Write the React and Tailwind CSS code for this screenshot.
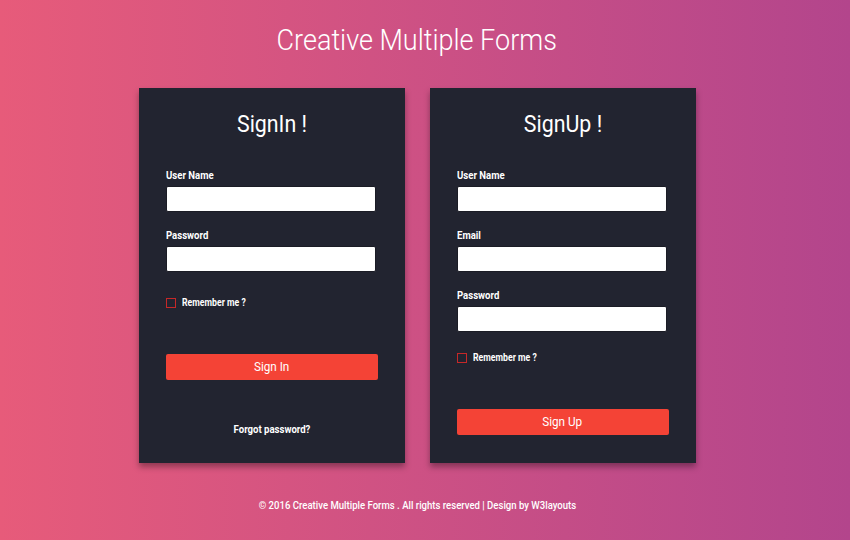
import React from 'react'

// Roboto Condensed isn't installed, so text is narrowed with scale-x
const Field = ({ label, type = 'text', first }) => (
  <div className={first ? 'mt-[30px]' : 'mt-[17px]'}>
    <label className="block origin-left scale-x-[0.87] text-[11px] leading-[14px] font-bold text-white">{label}</label>
    <input
      type={type}
      className="mt-[3px] block w-[210px] h-[26px] bg-white rounded-[2px] border border-[#1b1c25] outline-none"
    />
  </div>
)

const Remember = ({ mt }) => (
  <label className={`flex items-center gap-[6px] ${mt}`}>
    <span className="w-[10px] h-[10px] border border-[#c62828] inline-block" />
    <span className="inline-block origin-left scale-x-[0.87] text-[10px] leading-[14px] font-bold text-white">Remember me ?</span>
  </label>
)

const Button = ({ children, mt }) => (
  <button
    className={`${mt} block w-[212px] h-[26px] bg-[#f44336] rounded-[2px] text-white text-[13px] leading-[26px]`}
  >
    <span className="inline-block scale-x-[0.9]">{children}</span>
  </button>
)

const App = () => {
  return (
    <div
      className="w-[850px] h-[540px] pr-[16px] bg-gradient-to-r from-[#e75b7a] to-[#b3458c] flex flex-col items-center"
      style={{ fontFamily: 'Roboto, "Open Sans", sans-serif' }}
    >
      <h1 className="mt-[22px] scale-x-[0.9] text-[30px] leading-[36px] font-light text-white">Creative Multiple Forms</h1>

      <div className="mt-[30px] flex gap-[25px]">
        {/* Sign in */}
        <div className="w-[266px] h-[375px] bg-[#222430] shadow-[0_4px_6px_rgba(0,0,0,0.35)] px-[27px] pt-[21px]">
          <h2 className="text-center scale-x-[0.89] text-[24px] leading-[30px] text-white">SignIn !</h2>
          <Field label="User Name" first />
          <Field label="Password" type="password" />
          <Remember mt="mt-[24px]" />
          <Button mt="mt-[44px]">Sign In</Button>
          <p className="mt-[43px] text-center scale-x-[0.87] text-[11px] leading-[14px] font-bold text-white">Forgot password?</p>
        </div>

        {/* Sign up */}
        <div className="w-[266px] h-[375px] bg-[#222430] shadow-[0_4px_6px_rgba(0,0,0,0.35)] px-[27px] pt-[21px]">
          <h2 className="text-center scale-x-[0.89] text-[24px] leading-[30px] text-white">SignUp !</h2>
          <Field label="User Name" first />
          <Field label="Email" type="email" />
          <Field label="Password" type="password" />
          <Remember mt="mt-[19px]" />
          <Button mt="mt-[44px]">Sign Up</Button>
        </div>
      </div>

      <p className="mt-[36px] scale-x-[0.87] text-[11px] leading-[14px] font-medium text-white">
        © 2016 Creative Multiple Forms . All rights reserved | Design by W3layouts
      </p>
    </div>
  )
}

export default App
